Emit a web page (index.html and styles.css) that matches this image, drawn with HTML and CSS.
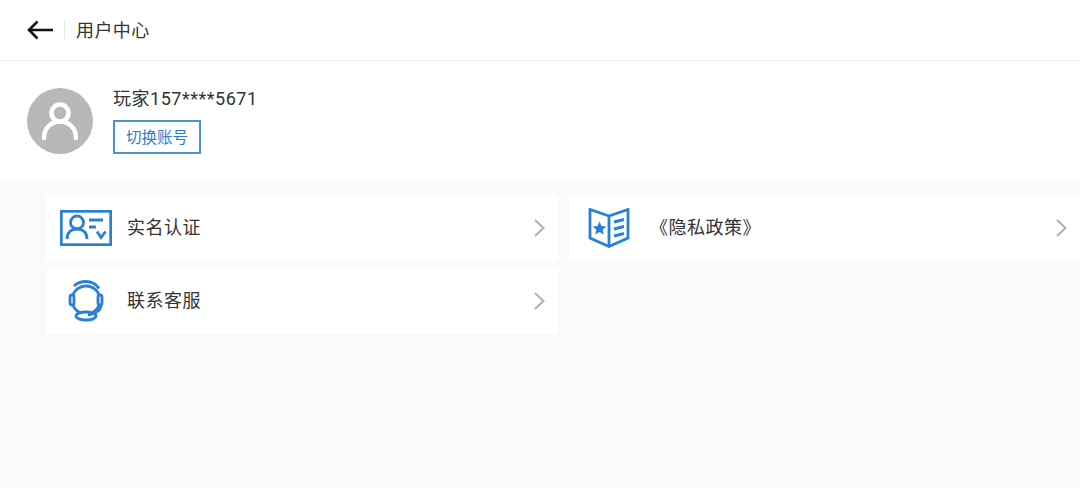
FILE: index.html
```html
<!DOCTYPE html>
<html lang="zh-CN">
<head>
  <meta charset="UTF-8" />
  <meta name="viewport" content="width=device-width, initial-scale=1.0" />
  <title>用户中心</title>
  <link rel="stylesheet" href="styles.css">
</head>
<body>
  <div class="app-container">
    <header class="top-bar">
      <svg class="back-icon" width="27" height="20" viewBox="0 0 27 20"><path d="M26 10H2M10.500 1.500L2 10l8.500 8.500"/></svg>
      <span class="top-divider"></span>
      <span class="top-title">用户中心</span>
    </header>

    <section class="profile">
      <div class="avatar">
        <svg width="36" height="38" viewBox="0 0 36 38"><circle cx="18" cy="11" r="8.500"/><path d="M2 36c0-10 7-16.500 16-16.500S34 26 34 36"/></svg>
      </div>
      <div class="profile-info">
        <div class="player-name">玩家157****5671</div>
        <button class="switch-btn">切换账号</button>
      </div>
    </section>

    <main class="menu">
      <div class="card">
        <div class="icon-slot">
          <svg class="card-icon" width="52" height="36" viewBox="0 0 52 36">
            <rect x="1.300" y="1.300" width="49.400" height="33.400" />
            <circle cx="17" cy="12.500" r="6.500"/>
            <path d="M7 29c0-7 4.500-10 10-10s10 3 10 10M29 10h14M29 17h7M37 21.500l4 6 4.500-6"/>
          </svg>
        </div>
        <span class="card-label">实名认证</span>
        <svg class="chevron" width="13" height="20" viewBox="0 0 13 20"><path d="M2 2l8.500 8L2 18"/></svg>
      </div>
      <div class="card">
        <div class="icon-slot">
          <svg class="card-icon" width="42" height="40" viewBox="0 0 42 40">
            <path d="M21 8L2 1.500V30l19 8.500L40 30V1.500zM21 8v30.500"/>
            <path class="star" d="M11.500 13.500l2 4.600 4.800.4-3.600 3.200 1.100 4.800-4.300-2.500-4.300 2.500 1.100-4.800-3.600-3.200 4.800-.4z"/>
            <path class="thick" d="M26 14l10-2.500M26 21l10-2.500M26 28l10-2.500"/>
          </svg>
        </div>
        <span class="card-label">《隐私政策》</span>
        <svg class="chevron" width="13" height="20" viewBox="0 0 13 20"><path d="M2 2l8.500 8L2 18"/></svg>
      </div>
      <div class="card">
        <div class="icon-slot">
          <svg class="card-icon" width="40" height="42" viewBox="0 0 40 42">
            <circle cx="20" cy="20" r="14"/>
            <path d="M8 6C11 3 15 1.500 20 1.500c5 0 10 2.500 13 7"/>
            <ellipse cx="20" cy="36" rx="10" ry="4" class="base"/>
            <rect class="ear" x="4" y="15" width="4" height="10" rx="2"/>
            <rect class="ear" x="32" y="15" width="4" height="10" rx="2"/>
            <path d="M35 25c0 5-5 9-13 10"/>
          </svg>
        </div>
        <span class="card-label">联系客服</span>
        <svg class="chevron" width="13" height="20" viewBox="0 0 13 20"><path d="M2 2l8.500 8L2 18"/></svg>
      </div>
    </main>
  </div>
</body>
</html>
```

FILE: styles.css
```css
body {
  margin: 0;
  font-family: "Roboto", "Noto Sans CJK SC", sans-serif;
  color: #333;
  background-color: #fafafa;
}
.app-container {
  display: flex;
  flex-direction: column;
  min-height: 100vh;
}
.top-bar {
  display: flex;
  align-items: center;
  height: 60px;
  padding-left: 27px;
  background: #fff;
  border-bottom: 1px solid #f0f0f0;
}
.back-icon {
  fill: none;
  stroke: #111;
  stroke-width: 2.600;
}
.top-divider {
  width: 1px;
  height: 18px;
  margin: 0 11px 0 10px;
  background: #e6e6e6;
}
.top-title {
  font-size: 18px;
  letter-spacing: 0.400px;
  padding-bottom: 2px;
}
.profile {
  display: flex;
  gap: 20px;
  height: 120px;
  padding-left: 27px;
  background: #fff;
  box-sizing: border-box;
  padding-top: 27px;
}
.avatar {
  display: flex;
  align-items: center;
  justify-content: center;
  width: 66px;
  height: 66px;
  border-radius: 50%;
  background: #b8b8b8;
}
.avatar svg {
  fill: none;
  stroke: #fff;
  stroke-width: 4.500;
  stroke-linecap: round;
}
.profile-info {
  display: flex;
  flex-direction: column;
  align-items: flex-start;
}
.player-name {
  font-size: 18px;
  line-height: 22px;
  letter-spacing: 0.520px;
  margin-bottom: 10px;
}
.switch-btn {
  width: 88px;
  height: 34px;
  padding: 0 0 3px;
  background: #fff;
  border: 2px solid #4b94cf;
  color: #2a7fc9;
  font-family: inherit;
  font-size: 15.500px;
}
.menu {
  display: grid;
  grid-template-columns: 512px 1fr;
  grid-auto-rows: 66px;
  column-gap: 11px;
  row-gap: 7px;
  padding: 14px 0 0 46px;
}
.card {
  display: flex;
  align-items: center;
  position: relative;
  background: #fff;
}
.icon-slot {
  display: flex;
  justify-content: center;
  width: 79px;
  margin-right: 2px;
  flex-shrink: 0;
}
.card-icon {
  fill: none;
  stroke: #2a80d2;
  stroke-width: 2.800;
}
.card-icon .star {
  fill: #2a80d2;
  stroke: none;
}
.card-icon .thick {
  stroke-width: 3;
}
.card-icon .ear {
  fill: #fff;
}
.card-icon .base {
  fill: #fff;
}
.card-label {
  font-size: 18px;
  letter-spacing: 0.500px;
  padding-bottom: 5px;
}
.chevron {
  position: absolute;
  right: 12px;
  top: 23px;
  fill: none;
  stroke: #b0b0b0;
  stroke-width: 2;
}
```
